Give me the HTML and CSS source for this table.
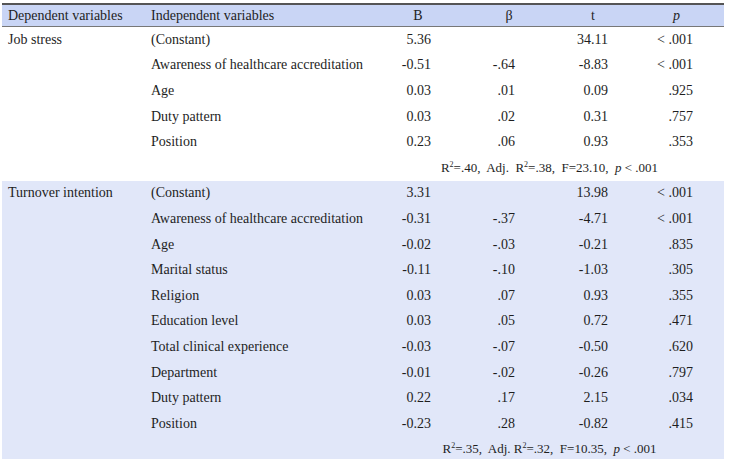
FILE: index.html
```html
<!DOCTYPE html>
<html lang="en">
<head>
    <meta charset="UTF-8">
    <title>Regression table</title>
    <link rel="stylesheet" href="styles.css">
</head>
<body>
    <div class="wrap">
    <table class="reg">
        <colgroup>
            <col class="c-dep">
            <col class="c-ind">
            <col class="c-b">
            <col class="c-beta">
            <col class="c-t">
            <col class="c-p">
        </colgroup>
        <thead>
            <tr>
                <th class="left">Dependent variables</th>
                <th class="left">Independent variables</th>
                <th>B</th>
                <th>β</th>
                <th>t</th>
                <th><i>p</i></th>
            </tr>
        </thead>
        <tbody>
            <tr><td>Job stress</td><td>(Constant)</td><td class="num b">5.36</td><td class="num beta"></td><td class="num t">34.11</td><td class="num p">&lt; .001</td></tr>
            <tr><td></td><td>Awareness of healthcare accreditation</td><td class="num b">-0.51</td><td class="num beta">-.64</td><td class="num t">-8.83</td><td class="num p">&lt; .001</td></tr>
            <tr><td></td><td>Age</td><td class="num b">0.03</td><td class="num beta">.01</td><td class="num t">0.09</td><td class="num p">.925</td></tr>
            <tr><td></td><td>Duty pattern</td><td class="num b">0.03</td><td class="num beta">.02</td><td class="num t">0.31</td><td class="num p">.757</td></tr>
            <tr><td></td><td>Position</td><td class="num b">0.23</td><td class="num beta">.06</td><td class="num t">0.93</td><td class="num p">.353</td></tr>
            <tr><td></td><td></td><td colspan="4" class="fit">R<sup>2</sup>=.40,&nbsp; Adj.&nbsp; R<sup>2</sup>=.38,&nbsp; F=23.10,&nbsp; <i>p</i> &lt; .001</td></tr>
        </tbody>
        <tbody class="shaded">
            <tr><td>Turnover intention</td><td>(Constant)</td><td class="num b">3.31</td><td class="num beta"></td><td class="num t">13.98</td><td class="num p">&lt; .001</td></tr>
            <tr><td></td><td>Awareness of healthcare accreditation</td><td class="num b">-0.31</td><td class="num beta">-.37</td><td class="num t">-4.71</td><td class="num p">&lt; .001</td></tr>
            <tr><td></td><td>Age</td><td class="num b">-0.02</td><td class="num beta">-.03</td><td class="num t">-0.21</td><td class="num p">.835</td></tr>
            <tr><td></td><td>Marital status</td><td class="num b">-0.11</td><td class="num beta">-.10</td><td class="num t">-1.03</td><td class="num p">.305</td></tr>
            <tr><td></td><td>Religion</td><td class="num b">0.03</td><td class="num beta">.07</td><td class="num t">0.93</td><td class="num p">.355</td></tr>
            <tr><td></td><td>Education level</td><td class="num b">0.03</td><td class="num beta">.05</td><td class="num t">0.72</td><td class="num p">.471</td></tr>
            <tr><td></td><td>Total clinical experience</td><td class="num b">-0.03</td><td class="num beta">-.07</td><td class="num t">-0.50</td><td class="num p">.620</td></tr>
            <tr><td></td><td>Department</td><td class="num b">-0.01</td><td class="num beta">-.02</td><td class="num t">-0.26</td><td class="num p">.797</td></tr>
            <tr><td></td><td>Duty pattern</td><td class="num b">0.22</td><td class="num beta">.17</td><td class="num t">2.15</td><td class="num p">.034</td></tr>
            <tr><td></td><td>Position</td><td class="num b">-0.23</td><td class="num beta">.28</td><td class="num t">-0.82</td><td class="num p">.415</td></tr>
            <tr><td></td><td></td><td colspan="4" class="fit">R<sup>2</sup>=.35,&nbsp; Adj. R<sup>2</sup>=.32,&nbsp; F=10.35,&nbsp; <i>p</i> &lt; .001</td></tr>
        </tbody>
    </table>
    </div>
</body>
</html>
```

FILE: styles.css
```css
body {
    margin: 0;
    background: #fff;
    color: #1e1e1e;
    font-family: "Liberation Serif", "DejaVu Serif", serif;
    font-size: 14px;
}
.wrap {
    padding: 3px 18px 0 2px;
}
.reg {
    width: 722px;
    border-collapse: collapse;
    table-layout: fixed;
}
.c-dep { width: 143px; }
.c-ind { width: 230px; }
.c-b { width: 86px; }
.c-beta { width: 96px; }
.c-t { width: 72px; }
.c-p { width: 95px; }

.reg thead th {
    background: #c9d5f5;
    border-top: 2px solid #555;
    border-bottom: 1px solid #777;
    font-weight: normal;
    height: 21px;
    padding: 0 6px;
    text-align: center;
}
.reg thead th.left {
    text-align: left;
}
.reg td {
    height: 25.6px;
    padding: 0 6px;
    white-space: nowrap;
}
.shaded td {
    background: #e1e7f9;
}
.num {
    text-align: right;
}
.num.b { padding-right: 30px; }
.num.beta { padding-right: 42px; }
.num.t { padding-right: 21px; }
.num.p { padding-right: 31px; }
.fit {
    text-align: center;
    font-size: 13px;
}
sup {
    font-size: 8px;
    line-height: 0;
}
```
